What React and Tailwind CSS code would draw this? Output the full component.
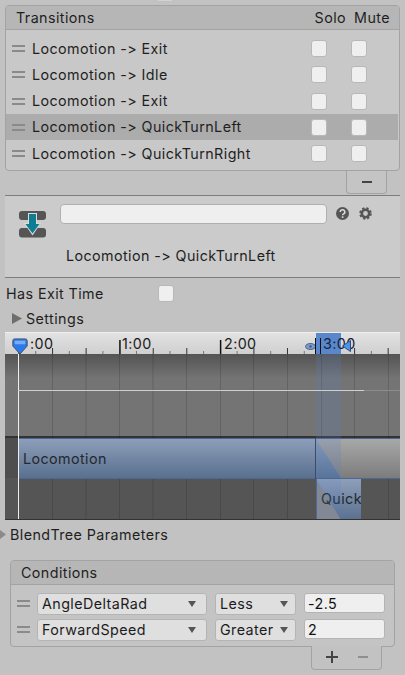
import React from 'react';

const transitions = [
    { name: 'Locomotion -> Exit' },
    { name: 'Locomotion -> Idle' },
    { name: 'Locomotion -> Exit' },
    { name: 'Locomotion -> QuickTurnLeft', selected: true },
    { name: 'Locomotion -> QuickTurnRight' },
];

const rulerLabels = [
    { text: ':00', left: 25 },
    { text: '1:00', left: 117 },
    { text: '2:00', left: 219 },
];

const gridXs = [47, 80.5, 114, 147.5, 181, 215, 248, 282, 316, 349, 383];

const Check = ({ className = '' }) => (
    <div className={`h-[17px] w-[16px] rounded-[3px] border border-[#b8b8b8] bg-[#efefef] ${className}`} />
);

const Grip = () => (
    <div className="flex w-[13px] flex-col gap-[3px]">
        <div className="h-[2px] bg-[#8a8a8a]" />
        <div className="h-[2px] bg-[#8a8a8a]" />
    </div>
);

const Dropdown = ({ label, className = '' }) => (
    <div className={`flex h-[22px] items-center justify-between rounded-[3px] border border-[#b4b4b4] bg-[#dfdfdf] pl-[4px] pr-[9px] text-[#1c1c1c] ${className}`}>
        <span>{label}</span>
        <svg width="10" height="6" viewBox="0 0 10 6"><path d="M1 0h8L5 6z" fill="#555" /></svg>
    </div>
);

const Ruler = () => {
    const ticks = [];
    for (let i = 0; i < 23; i++) {
        const x = 13.5 + i * 16.78;
        const major = i % 6 === 0;
        const mid = i % 2 === 0;
        ticks.push(
            <rect
                key={i}
                x={x}
                y={major ? 7 : mid ? 15 : 18}
                width={major ? 1.5 : 1}
                height={major ? 14 : mid ? 6 : 3}
                fill={major ? '#111' : mid ? '#333' : '#777'}
            />
        );
    }
    return (
        <svg className="absolute left-0 top-0" width="395" height="22">{ticks}</svg>
    );
};

const Timeline = () => (
    <div className="relative mt-[3px] h-[188px] overflow-hidden border-b border-t border-b-[#333] border-t-[#eee] bg-[#747474]">
        {/* ruler */}
        <div className="relative h-[21px] bg-gradient-to-b from-[#e2e2e2] to-[#cfcfcf] text-[14.3px] text-[#1a1a1a]">
            <Ruler />
            {rulerLabels.map((l) => (
                <span key={l.text} className="absolute top-[2px]" style={{ left: l.left }}>{l.text}</span>
            ))}
        </div>

        {/* upper track */}
        <div className="h-[82px] bg-gradient-to-b from-[#545454] via-[#747474] via-30% to-[#747474]" />
        <div className="h-[2px] bg-[#333]" />

        {/* state rows */}
        <div className="relative h-[40px] bg-[#4e4e4e]" />
        <div className="h-[41px] bg-[#555]" />

        {/* grid, bars and transition wedges */}
        <svg className="absolute left-0 top-[21px]" width="395" height="166">
            {gridXs.map((x) => (
                <rect key={x} x={x} y="0" width="1" height="165" fill="#000" opacity="0.14" />
            ))}
        </svg>
        <svg className="absolute left-0 top-[105px]" width="395" height="83">
            <defs>
                <linearGradient id="grayBar" x1="0" y1="0" x2="0" y2="1">
                    <stop offset="0" stopColor="#a8a8a8" />
                    <stop offset="1" stopColor="#7c7c7c" />
                </linearGradient>
                <linearGradient id="blueBar" x1="0" y1="0" x2="0" y2="1">
                    <stop offset="0" stopColor="#8e9fba" />
                    <stop offset="1" stopColor="#59708f" />
                </linearGradient>
            </defs>
            <rect x="13" y="0" width="298" height="40" fill="url(#blueBar)" />
            <rect x="13" y="0" width="382" height="1" fill="#4d6793" />
            <rect x="13" y="40" width="382" height="1" fill="#4d6793" />
            <rect x="311" y="1" width="84" height="39" fill="url(#grayBar)" />
            <polygon points="311,1 311,40 336,40" fill="url(#blueBar)" />
            <rect x="310" y="0" width="1" height="41" fill="#3d4d68" />
            <rect x="311" y="41" width="45" height="41" fill="url(#blueBar)" />
            <polygon points="311,41 311,82 336,82" fill="#8b8b8b" />
            <rect x="311" y="41" width="1" height="41" fill="#4d6793" />
            <rect x="311" y="81" width="45" height="1" fill="#4d6793" />
        </svg>

        <span className="absolute left-[18px] top-[117px] text-[14.3px] text-[#24282f]">Locomotion</span>
        <span className="absolute left-[316px] top-[157px] w-[40px] overflow-hidden text-[14.3px] text-[#24282f]">Quick</span>

        {/* selected range */}
        <div className="absolute bottom-[41px] left-[311px] top-[21px] w-[25px] bg-[#5a82c8]/20" />
        <div className="absolute bottom-0 left-[311px] top-[146px] w-[25px] bg-[#5a82c8]/15" />
        <div className="absolute left-[311px] top-0 h-[21px] w-[25px] bg-[#5a86cc] text-[14.3px] text-[#14233a]">
            <span className="absolute left-[7px] top-[2px] whitespace-nowrap">3:00</span>
        </div>

        {/* playhead line */}
        <div className="absolute bottom-0 left-[13px] top-[21px] w-px bg-[#eeeeee]" />
        <div className="absolute left-[13px] top-[57px] h-px w-[346px] bg-[#cfcfcf]" />
        <div className="absolute left-[359px] top-[57px] h-px w-[36px] bg-[#8c8c8c]" />

        {/* ruler markers */}
        <svg className="absolute left-[6px] top-[5px]" width="18" height="17" viewBox="0 0 18 19">
            <path d="M3 1h12a2 2 0 0 1 2 2v6l-8 9-8-9V3a2 2 0 0 1 2-2z" fill="#2f78e8" stroke="#3a4a60" />
            <path d="M3 3h12v4H3z" fill="#74aef8" />
        </svg>
        <svg className="absolute left-[300px] top-[10px]" width="11" height="7" viewBox="0 0 11 7">
            <ellipse cx="5.500" cy="3.500" rx="5" ry="3" fill="#7f9cc6" stroke="#3f5f8f" />
            <circle cx="5.500" cy="3.500" r="1.300" fill="#3f5f8f" />
        </svg>
        <svg className="absolute left-[337px] top-[7px]" width="9" height="12" viewBox="0 0 9 12">
            <path d="M8.500 .5v11L.5 6z" fill="#4d93ea" stroke="#2b4a7a" />
        </svg>
        <div className="absolute left-[310px] top-[5px] h-[16px] w-px bg-[#111]" />
        <div className="absolute left-[315px] top-[5px] h-[16px] w-px bg-[#111]" />
    </div>
);

const App = () => (
    <div
        className="h-[675px] w-[405px] overflow-hidden bg-[#c2c2c2] text-[14.3px] leading-[18px] tracking-[0.42px] text-[#1f1f1f]"
        style={{ fontFamily: 'Inter, "Noto Sans", sans-serif' }}
    >
        <div className="ml-[158px] h-px w-[14px] bg-[#d2d2d2]" />
        <div className="pl-[5px] pr-[5px] pt-[4px]">
            {/* Transitions list */}
            <div className="overflow-hidden rounded-[4px] border border-[#a3a3a3] bg-[#c8c8c8]">
                <div className="flex h-[24px] items-center justify-between border-b border-[#a3a3a3] bg-[#b6b6b6] pl-[10px] pr-[9px]">
                    <span>Transitions</span>
                    <div className="flex gap-[8px]">
                        <span>Solo</span>
                        <span>Mute</span>
                    </div>
                </div>
                <div className="pb-[3px] pt-[5.400px]">
                    {transitions.map((t, i) => (
                        <div
                            key={i}
                            className={`flex h-[26.250px] items-center pl-[6px] ${t.selected ? 'mr-[1px] bg-[#acacac]' : ''}`}
                        >
                            <Grip />
                            <span className="ml-[7px] flex-1 truncate">{t.name}</span>
                            <Check className="mr-[24px]" />
                            <Check className={t.selected ? 'mr-[31px]' : 'mr-[32px]'} />
                        </div>
                    ))}
                </div>
            </div>
            <div className="flex justify-end pr-[13px]">
                <div className="flex h-[23px] w-[41px] items-center justify-center rounded-b-[4px] border border-t-0 border-[#a3a3a3] bg-[#c4c4c4]">
                    <div className="h-[2px] w-[10px] bg-[#444]" />
                </div>
            </div>
        </div>

        {/* Transition header */}
        <div className="ml-[5px] mr-[5px] mt-[1px] h-[83px] border-y border-[#7d7d7d] bg-[#cbcbcb]">
            <div className="flex pl-[14px] pt-[8px]">
                <svg className="mt-[7px]" width="27" height="27" viewBox="0 0 27 27">
                    <rect x="0" y="0" width="27" height="9" rx="3" fill="#555" />
                    <rect x="0" y="17" width="27" height="9.500" rx="3" fill="#555" />
                    <path d="M9 2h9v10h4l-8.500 12.500L5 12h4z" fill="#dcdcdc" />
                    <path d="M10 3h7v10h3.500l-7 9.500-7-9.500H10z" fill="#0e7d92" />
                </svg>
                <div className="ml-[14px] flex flex-col">
                    <div className="flex items-center">
                        <div className="h-[20px] w-[267px] rounded-[4px] border border-[#b0b0b0] bg-[#efefef]" />
                        <svg className="ml-[9px]" width="13" height="13" viewBox="0 0 13 13">
                            <circle cx="6.500" cy="6.500" r="6.500" fill="#555" />
                            <path d="M4.200 5a2.300 2.200 0 1 1 3.400 1.900c-.7.4-1 .7-1 1.400" fill="none" stroke="#ddd" strokeWidth="1.500" />
                            <rect x="5.800" y="9.300" width="1.600" height="1.600" fill="#ddd" />
                        </svg>
                        <svg className="ml-[10px]" width="13" height="13" viewBox="0 0 13 13">
                            <circle cx="6.500" cy="6.500" r="3.700" fill="none" stroke="#555" strokeWidth="2.600" />
                            <circle cx="6.500" cy="6.500" r="5.300" fill="none" stroke="#555" strokeWidth="2" strokeDasharray="2.200 2" />
                        </svg>
                    </div>
                    <span className="ml-[6px] mt-[23px]">Locomotion -&gt; QuickTurnLeft</span>
                </div>
            </div>
        </div>

        {/* Settings */}
        <div className="px-[5px]">
            <div className="mt-[6px] flex h-[20px] items-center">
                <span className="ml-[1px] w-[152px]">Has Exit Time</span>
                <Check />
            </div>
            <div className="mt-[5px] flex h-[20px] items-center pl-[7px]">
                <svg width="10" height="11" viewBox="0 0 10 11"><path d="M0 0l10 5.500L0 11z" fill="#6e6e6e" /></svg>
                <span className="ml-[4px]">Settings</span>
            </div>

            <Timeline />
        </div>

        {/* BlendTree Parameters */}
        <div className="mt-[6px] flex h-[18px] items-center">
            <svg width="6" height="9" viewBox="0 0 6 9"><path d="M0 0l6 4.500L0 9z" fill="#8a8a8a" /></svg>
            <span className="ml-[4px]">BlendTree Parameters</span>
        </div>

        {/* Conditions */}
        <div className="pl-[10px] pr-[10px] pt-[16px]">
            <div className="overflow-hidden rounded-[4px] border border-[#a3a3a3] bg-[#c4c4c4]">
                <div className="flex h-[24px] items-center border-b border-[#a3a3a3] bg-[#b6b6b6] pl-[10px] pt-[1px]">Conditions</div>
                <div className="flex flex-col gap-[4px] pb-[5px] pl-[6px] pt-[8px]">
                    {[
                        { param: 'AngleDeltaRad', op: 'Less', value: '-2.5' },
                        { param: 'ForwardSpeed', op: 'Greater', value: '2' },
                    ].map((c) => (
                        <div key={c.param} className="flex items-start">
                            <div className="self-center"><Grip /></div>
                            <Dropdown label={c.param} className="ml-[7px] w-[170px]" />
                            <Dropdown label={c.op} className="ml-[8px] w-[81px] !pr-[6px]" />
                            <div className="ml-[8px] flex h-[20px] w-[81px] items-center rounded-[3px] border border-[#b4b4b4] bg-[#efefef] pl-[3px] pt-[2px] text-[#111]">{c.value}</div>
                        </div>
                    ))}
                </div>
            </div>
            <div className="flex justify-end pr-[13px]">
                <div className="-mt-px flex h-[24px] w-[71px] items-center justify-center gap-[20px] rounded-b-[4px] border border-t-0 border-[#a3a3a3] bg-[#c2c2c2]">
                    <svg width="12" height="12" viewBox="0 0 12 12"><path d="M5 0h2v5h5v2H7v5H5V7H0V5h5z" fill="#444" /></svg>
                    <div className="h-[2px] w-[10px] bg-[#8f8f8f]" />
                </div>
            </div>
        </div>
    </div>
);

export default App;
